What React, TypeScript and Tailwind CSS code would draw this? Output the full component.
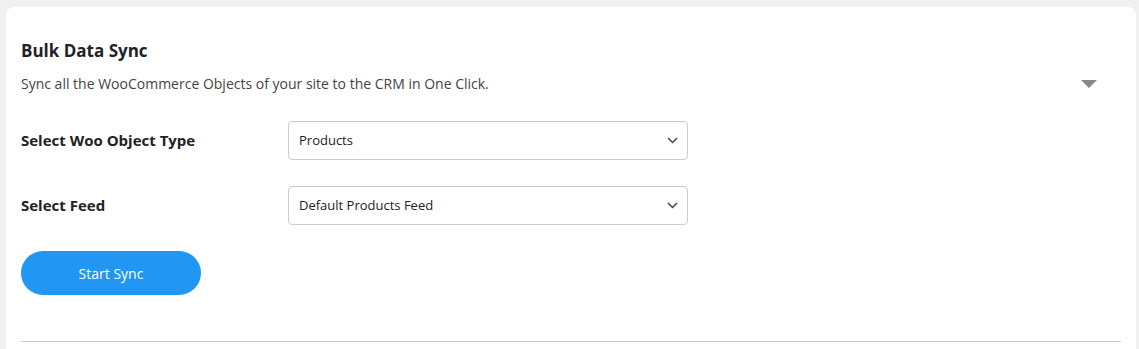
import React from 'react';

const font = { fontFamily: '"Open Sans", "Noto Sans", sans-serif' };

const Chevron = () => (
  <svg width="11" height="7" viewBox="0 0 11 7" className="shrink-0">
    <path d="M1 1l4.5 4.5L10 1" fill="none" stroke="#444" strokeWidth="1.5" />
  </svg>
);

const SelectRow = ({ label, value }: { label: string; value: string }) => (
  <div className="flex items-center">
    <div className="w-[267px] text-[15px] font-bold text-[#222]">{label}</div>
    <div className="flex h-[39px] w-[400px] items-center justify-between rounded-[4px] border border-[#ccc] bg-white pl-[10px] pr-[9px]">
      <span className="text-[13px] text-[#222]">{value}</span>
      <Chevron />
    </div>
  </div>
);

export default function App() {
  return (
    <div className="h-[349px] overflow-hidden bg-[#f0f0f0] pl-[6px] pr-[3px] pt-[7px]" style={font}>
      <div className="h-[360px] rounded-t-[8px] bg-white px-[15px] pt-[32px]">
        <h2 className="text-[17px] font-bold leading-[24px] text-[#1d2327]">Bulk Data Sync</h2>
        <div className="mt-[12px] flex items-center justify-between">
          <p className="text-[14px] leading-[18px] text-[#444]">
            Sync all the WooCommerce Objects of your site to the CRM in One Click.
          </p>
          <div className="mr-[24px] h-0 w-0 border-l-[8px] border-r-[8px] border-t-[8px] border-l-transparent border-r-transparent border-t-[#888]" />
        </div>
        <div className="mt-[28px] flex flex-col gap-[26px]">
          <SelectRow label="Select Woo Object Type" value="Products" />
          <SelectRow label="Select Feed" value="Default Products Feed" />
        </div>
        <button className="mt-[26px] h-[44px] w-[180px] rounded-full bg-[#2196f3] text-[14px] text-white">
          Start Sync
        </button>
        <div className="mt-[46px] border-t border-[#ccc]" />
      </div>
    </div>
  );
}
